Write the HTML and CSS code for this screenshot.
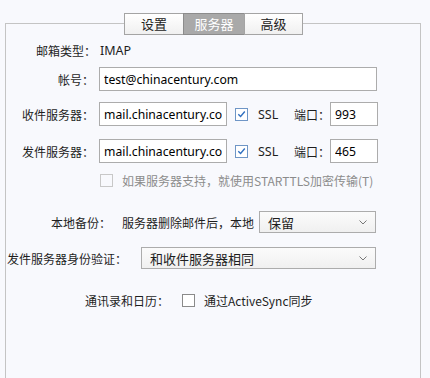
FILE: index.html
```html
<!DOCTYPE html>
<html lang="zh-CN">
<head>
    <meta charset="UTF-8">
    <title>账户设置 - 服务器</title>
    <link rel="stylesheet" href="styles.css">
</head>
<body>
    <div class="panel">
        <div class="tabs">
            <div class="tab">设置</div>
            <div class="tab active">服务器</div>
            <div class="tab">高级</div>
        </div>

        <div class="row row-type">
            <span class="label">邮箱类型：</span>
            <span class="value">IMAP</span>
        </div>

        <div class="row row-account">
            <span class="label">帐号：</span>
            <input class="field field-wide" type="text" value="test@chinacentury.com" readonly>
        </div>

        <div class="row row-in">
            <span class="label">收件服务器：</span>
            <input class="field field-host" type="text" value="mail.chinacentury.com" readonly>
            <span class="check checked"><svg viewBox="0 0 12 12" width="12" height="12"><path d="M2.5 6.2 L5 8.6 L9.6 3.2" fill="none" stroke="#2f6fc0" stroke-width="1.5"/></svg></span>
            <span class="ssl">SSL</span>
            <span class="port-label">端口：</span>
            <input class="field field-port" type="text" value="993" readonly>
        </div>

        <div class="row row-out">
            <span class="label">发件服务器：</span>
            <input class="field field-host" type="text" value="mail.chinacentury.com" readonly>
            <span class="check checked"><svg viewBox="0 0 12 12" width="12" height="12"><path d="M2.5 6.2 L5 8.6 L9.6 3.2" fill="none" stroke="#2f6fc0" stroke-width="1.5"/></svg></span>
            <span class="ssl">SSL</span>
            <span class="port-label">端口：</span>
            <input class="field field-port" type="text" value="465" readonly>
        </div>

        <div class="row row-tls disabled">
            <span class="check"></span>
            <span class="check-text">如果服务器支持，就使用STARTTLS加密传输(T)</span>
        </div>

        <div class="row row-backup">
            <span class="label label-backup">本地备份：</span>
            <span class="note">服务器删除邮件后，本地</span>
            <div class="select select-backup">
                <span>保留</span>
                <svg viewBox="0 0 8 5" width="8" height="5"><path d="M0.5 0.5 L4 4 L7.5 0.5" fill="none" stroke="#777" stroke-width="1"/></svg>
            </div>
        </div>

        <div class="row row-auth">
            <span class="label label-auth">发件服务器身份验证：</span>
            <div class="select select-auth">
                <span>和收件服务器相同</span>
                <svg viewBox="0 0 8 5" width="8" height="5"><path d="M0.5 0.5 L4 4 L7.5 0.5" fill="none" stroke="#777" stroke-width="1"/></svg>
            </div>
        </div>

        <div class="row row-sync">
            <span class="label label-sync">通讯录和日历：</span>
            <span class="check"></span>
            <span class="check-text">通过ActiveSync同步</span>
        </div>
    </div>
</body>
</html>
```

FILE: styles.css
```css
body {
    margin: 0;
    background-color: #f8f9fd;
    color: #1e1e1e;
    font-family: "Noto Sans CJK SC", "Noto Sans", sans-serif;
    font-size: 12px;
    overflow: hidden;
}

.panel {
    margin: 23px 0 0 5px;
    width: 416px;
    height: 360px;
    border: 1px solid #c4c4c4;
    box-sizing: border-box;
}

.tabs {
    display: flex;
    margin: -11px 0 0 118px;
}

.tab {
    height: 22px;
    line-height: 20px;
    box-sizing: border-box;
    border: 1px solid #a4a4a4;
    background: linear-gradient(#ffffff, #f0f0f0);
    text-align: center;
    font-size: 13px;
    color: #222;
    width: 60px;
}

.tab + .tab {
    margin-left: -1px;
}

.tab.active {
    width: 62px;
    background: #a9a9a9;
    border-color: #8c8c8c;
    color: #fff;
}

.tab:last-child {
    width: 59px;
}

.row {
    display: flex;
    align-items: center;
}

.label {
    width: 88px;
    text-align: right;
    flex-shrink: 0;
}

.row-type {
    height: 20px;
    margin-top: 5px;
}

.row-type .label {
    width: 90px;
}

.value {
    margin-left: 4px;
    font-family: "Noto Sans", sans-serif;
    font-size: 12.5px;
}

.field {
    height: 24px;
    box-sizing: border-box;
    border: 1px solid #acacac;
    background: #fff;
    padding: 0 4px;
    font-family: "Noto Sans", sans-serif;
    font-size: 12.2px;
    color: #000;
    margin: 0;
    outline: none;
}

.field-wide {
    margin-left: 5px;
    width: 278px;
}

.field-host {
    margin-left: 5px;
    width: 128px;
}

.field-port {
    width: 48px;
}

.row-account {
    margin-top: 7px;
}

.row-in {
    margin-top: 11px;
}

.row-out {
    margin-top: 13px;
}

.check {
    width: 13px;
    height: 13px;
    box-sizing: border-box;
    border: 1px solid #8a8a8a;
    background: #fff;
    display: flex;
    align-items: center;
    justify-content: center;
    flex-shrink: 0;
}

.check.checked {
    border-color: #6f96c6;
}

.row-in .check,
.row-out .check {
    margin-left: 8px;
}

.ssl {
    margin-left: 10px;
    font-family: "Noto Sans", sans-serif;
    font-size: 12.5px;
    width: 36px;
}

.port-label {
    width: 36px;
}

.row-tls {
    height: 20px;
    margin-top: 7px;
    padding-left: 94px;
}

.disabled .check {
    border-color: #c8c8c8;
    background: #f8f9fd;
}

.disabled .check-text {
    color: #8c8c8c;
}

.check-text {
    margin-left: 9px;
}

.row-backup {
    margin-top: 21px;
}

.label-backup {
    width: 105px;
}

.note {
    margin-left: 11px;
    width: 137px;
}

.select {
    height: 22px;
    box-sizing: border-box;
    border: 1px solid #acacac;
    background: linear-gradient(#fbfbfb, #f0f0f0);
    display: flex;
    align-items: center;
    justify-content: space-between;
    padding: 0 8px 0 8px;
}

.select span {
    font-size: 13px;
}

.select-backup {
    width: 117px;
}

.row-auth {
    margin-top: 14px;
}

.label-auth {
    width: auto;
    margin-left: 1px;
}

.select-auth {
    margin-left: 14px;
    width: 235px;
}

.row-sync {
    height: 20px;
    margin-top: 21px;
}

.label-sync {
    width: 163px;
    margin-right: 13px;
}

.row-sync .check-text {
    margin-left: 9px;
}
```
